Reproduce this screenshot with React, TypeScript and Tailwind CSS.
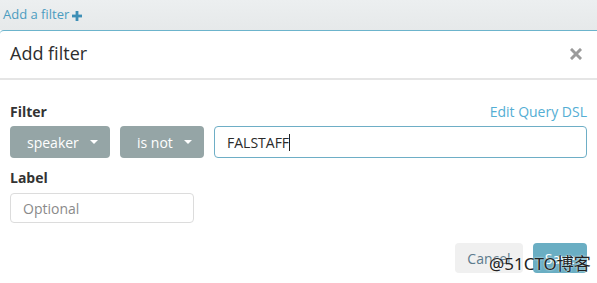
export default function App() {
  return (
    <div className="relative w-[597px] h-[283px] overflow-hidden bg-white font-['Open_Sans',sans-serif]">
      {/* Filter bar */}
      <div className="h-[30px] bg-gradient-to-b from-[#eceff0] to-[#e6e9ea] flex items-center px-[3px]">
        <span className="text-[13px] text-[#4b9cc0]">Add a filter</span>
        <svg viewBox="0 0 10 10" className="w-[10px] h-[10px] ml-[3px] mt-[1px]" fill="#3e8fb6">
          <rect x="3.6" y="0" width="2.8" height="10" />
          <rect x="0" y="3.6" width="10" height="2.8" />
        </svg>
      </div>

      {/* Modal */}
      <div className="border-t border-[#6cb4cc] rounded-tl-[4px]">
        <div className="h-[49px] flex items-center justify-between pl-[10px] pr-[15px] pb-[2px] border-b-2 border-[#e5e5e5]">
          <h2 className="text-[18px] text-[#2d2d2d]">Add filter</h2>
          <svg viewBox="0 0 12 12" className="w-[12px] h-[12px]" stroke="#9a9a9a" strokeWidth="3" strokeLinecap="square">
            <path d="M2 2L10 10M10 2L2 10" />
          </svg>
        </div>

        <div className="px-[10px] pt-[21px]">
          <div className="flex items-center justify-between h-[20px]">
            <label className="text-[14px] font-bold text-[#333]">Filter</label>
            <span className="text-[14px] text-[#54aed4]">Edit Query DSL</span>
          </div>

          <div className="flex gap-[10px] mt-[5px] h-[32px]">
            <button className="w-[100px] rounded-[4px] bg-[#95a5a6] text-white text-[14px] flex items-center gap-[11px] pl-[17px]">
              speaker
              <span className="w-0 h-0 border-x-[4px] border-x-transparent border-t-[4px] border-t-white" />
            </button>
            <button className="w-[84px] rounded-[4px] bg-[#95a5a6] text-white text-[14px] flex items-center gap-[11px] pl-[17px]">
              is not
              <span className="w-0 h-0 border-x-[4px] border-x-transparent border-t-[4px] border-t-white" />
            </button>
            <div className="flex-1 rounded-[4px] border border-[#6eaec6] flex items-center px-[12px] text-[14px] text-[#2b2b2b]">
              FALSTAFF<span className="w-px h-[17px] bg-[#222]" />
            </div>
          </div>

          <label className="block mt-[10px] h-[20px] text-[14px] font-bold text-[#333] leading-[20px]">Label</label>
          <div className="mt-[5px] w-[184px] h-[30px] rounded-[4px] border border-[#dcdcdc] flex items-center px-[12px] text-[14px] text-[#8a8a8a]">
            Optional
          </div>

          <div className="flex justify-end gap-[10px] mt-[20px]">
            <button className="w-[68px] h-[30px] rounded-[4px] bg-[#f0f0f0] text-[14px] text-[#5d7a8c]">Cancel</button>
            <button className="w-[54px] h-[30px] rounded-[4px] bg-[#6aaec3] text-[14px] text-white">Save</button>
          </div>
        </div>
      </div>

      {/* watermark */}
      <span className="absolute left-[489px] top-[251px] text-[17px] text-[#222] font-['Noto_Sans','Noto_Sans_CJK_SC',sans-serif] [text-shadow:0_0_2px_#fff]">
        @51CTO博客
      </span>
    </div>
  )
}
